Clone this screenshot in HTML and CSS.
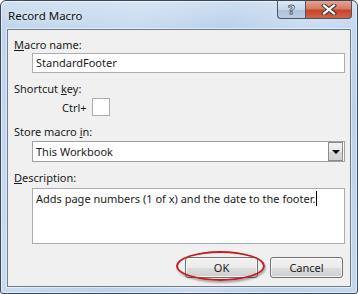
FILE: index.html
```html
<!DOCTYPE html>
<html lang="en">
<head>
    <meta charset="UTF-8">
    <title>Record Macro</title>
    <link rel="stylesheet" href="styles.css">
</head>
<body>
    <div class="window">
        <div class="title-bar">
            <span class="title-text">Record Macro</span>
            <div class="caption-buttons">
                <div class="caption-btn help-btn"><span>?</span></div>
                <div class="caption-btn close-btn">
                    <svg width="18" height="11" viewBox="0 0 18 11">
                        <path d="M4 1.5 L14 9.5 M14 1.5 L4 9.5" stroke="#3a3a3a" stroke-width="4.2" stroke-linecap="square" fill="none"/>
                        <path d="M4 1.5 L14 9.5 M14 1.5 L4 9.5" stroke="#ffffff" stroke-width="2.2" stroke-linecap="square" fill="none"/>
                    </svg>
                </div>
            </div>
        </div>

        <div class="client">
            <div class="label"><u>M</u>acro name:</div>
            <div class="field text-field">StandardFooter</div>

            <div class="label gap"><span>Shortcut </span><u>k</u>ey:</div>
            <div class="shortcut-row">
                <span class="ctrl-text">Ctrl+</span>
                <div class="key-box"></div>
            </div>

            <div class="label gap">Store macro <u>i</u>n:</div>
            <div class="field combo">
                <span class="combo-value">This Workbook</span>
                <div class="combo-btn"><span class="arrow"></span></div>
            </div>

            <div class="label gap"><u>D</u>escription:</div>
            <div class="field textarea">Adds page numbers (1 of x) and the date to the footer.<span class="caret"></span></div>

            <div class="button-row">
                <div class="btn">OK</div>
                <div class="btn">Cancel</div>
            </div>

            <!-- callout around the OK button -->
            <div class="callout"></div>
        </div>
    </div>
</body>
</html>
```

FILE: styles.css
```css
body {
    margin: 0;
    padding: 0;
    background: #ffffff;
    font-family: "Noto Sans", "Open Sans", sans-serif;
    font-size: 11px;
    color: #1a1a1a;
}

.window {
    position: relative;
    width: 358px;
    height: 294px;
    box-sizing: border-box;
    border: 1px solid #3b4657;
    border-radius: 6px 6px 3px 3px;
    background:
        linear-gradient(to bottom, rgba(255, 255, 255, 0.28), rgba(255, 255, 255, 0) 28px),
        linear-gradient(115deg, #bed4ec 0%, #c8dbf0 30%, #bad1ea 48%, #cadcf1 66%, #bcd2eb 82%, #c3d7ee 100%);
    box-shadow: inset 0 0 0 1px rgba(255, 255, 255, 0.55);
    padding: 0 6px 0 6px;
}

.title-bar {
    height: 28px;
    display: flex;
    align-items: flex-start;
    justify-content: space-between;
}

.title-text {
    margin-top: 7px;
    margin-left: 1px;
    font-size: 11.5px;
    color: #111;
    text-shadow: 0 0 6px rgba(255, 255, 255, 0.9);
}

.caption-buttons {
    display: flex;
    margin-right: -1px;
}

.caption-btn {
    height: 18px;
    box-sizing: border-box;
    border: 1px solid #4a5566;
    border-top: none;
    display: flex;
    align-items: center;
    justify-content: center;
}

.help-btn {
    width: 28px;
    border-right: none;
    border-radius: 0 0 0 4px;
    background: linear-gradient(to bottom, #dde8f4 0%, #c6d6e8 50%, #adc1da 51%, #bccde2 100%);
}

.help-btn span {
    font-family: "DejaVu Sans", sans-serif;
    font-weight: bold;
    font-size: 13px;
    color: #e8eef6;
    -webkit-text-stroke: 0.8px #4b5a6d;
    line-height: 1;
}

.close-btn {
    width: 47px;
    border-radius: 0 0 4px 0;
    background: linear-gradient(to bottom, #e5a493 0%, #d77a63 45%, #c4442c 55%, #d2624a 100%);
}

.close-btn svg {
    display: block;
}

.client {
    position: relative;
    height: 258px;
    box-sizing: border-box;
    border: 1px solid #6f7b8b;
    box-shadow: 0 0 0 1px rgba(255, 255, 255, 0.5);
    background: #f0f0f0;
    padding: 7px 5px 0 6px;
    display: flex;
    flex-direction: column;
}

.label {
    height: 15px;
    line-height: 15px;
    margin-bottom: 1px;
}

.label.gap {
    margin-top: 8px;
}

.field {
    margin-left: 18px;
    box-sizing: border-box;
    border: 1px solid #abadb3;
    background: #fff;
    padding-left: 3px;
}

.text-field {
    height: 20px;
    line-height: 18px;
}

.shortcut-row {
    display: flex;
    align-items: center;
    margin-top: 1px;
    padding-left: 48px;
}

.ctrl-text {
    margin-right: 5px;
}

.key-box {
    width: 18px;
    height: 18px;
    box-sizing: border-box;
    border: 1px solid #abadb3;
    background: #fff;
}

.combo {
    height: 21px;
    margin-top: 1px;
    border-color: #a0a0a0;
    display: flex;
    align-items: center;
    justify-content: space-between;
    padding-right: 1px;
}

.combo-btn {
    width: 15px;
    height: 19px;
    box-sizing: border-box;
    border: 1px solid #8a8a8a;
    background: linear-gradient(to bottom, #f2f2f2 0%, #e6e6e6 50%, #d6d6d6 51%, #d2d2d2 100%);
    display: flex;
    align-items: center;
    justify-content: center;
}

.arrow {
    width: 0;
    height: 0;
    border-left: 4px solid transparent;
    border-right: 4px solid transparent;
    border-top: 4px solid #000;
    margin-top: 1px;
}

.textarea {
    height: 56px;
    margin-top: 2px;
    padding-top: 1px;
    line-height: 17px;
}

.caret {
    display: inline-block;
    width: 1px;
    height: 15px;
    background: #000;
    vertical-align: -3px;
    margin-left: 1px;
}

.button-row {
    display: flex;
    justify-content: flex-end;
    gap: 12px;
    margin-top: 13px;
    padding-right: 2px;
}

.btn {
    width: 73px;
    height: 21px;
    box-sizing: border-box;
    border: 1px solid #707070;
    border-radius: 3px;
    background: linear-gradient(to bottom, #f2f2f2 0%, #ebebeb 50%, #dddddd 51%, #cfcfcf 100%);
    box-shadow: inset 0 0 0 1px rgba(255, 255, 255, 0.7);
    text-align: center;
    line-height: 19px;
}

.callout {
    position: absolute;
    left: 168px;
    top: 221px;
    width: 89px;
    height: 30px;
    box-sizing: border-box;
    border: 2px solid #c41e24;
    border-radius: 50%;
    box-shadow: 1px 2px 2px rgba(0, 0, 0, 0.3);
}
```
